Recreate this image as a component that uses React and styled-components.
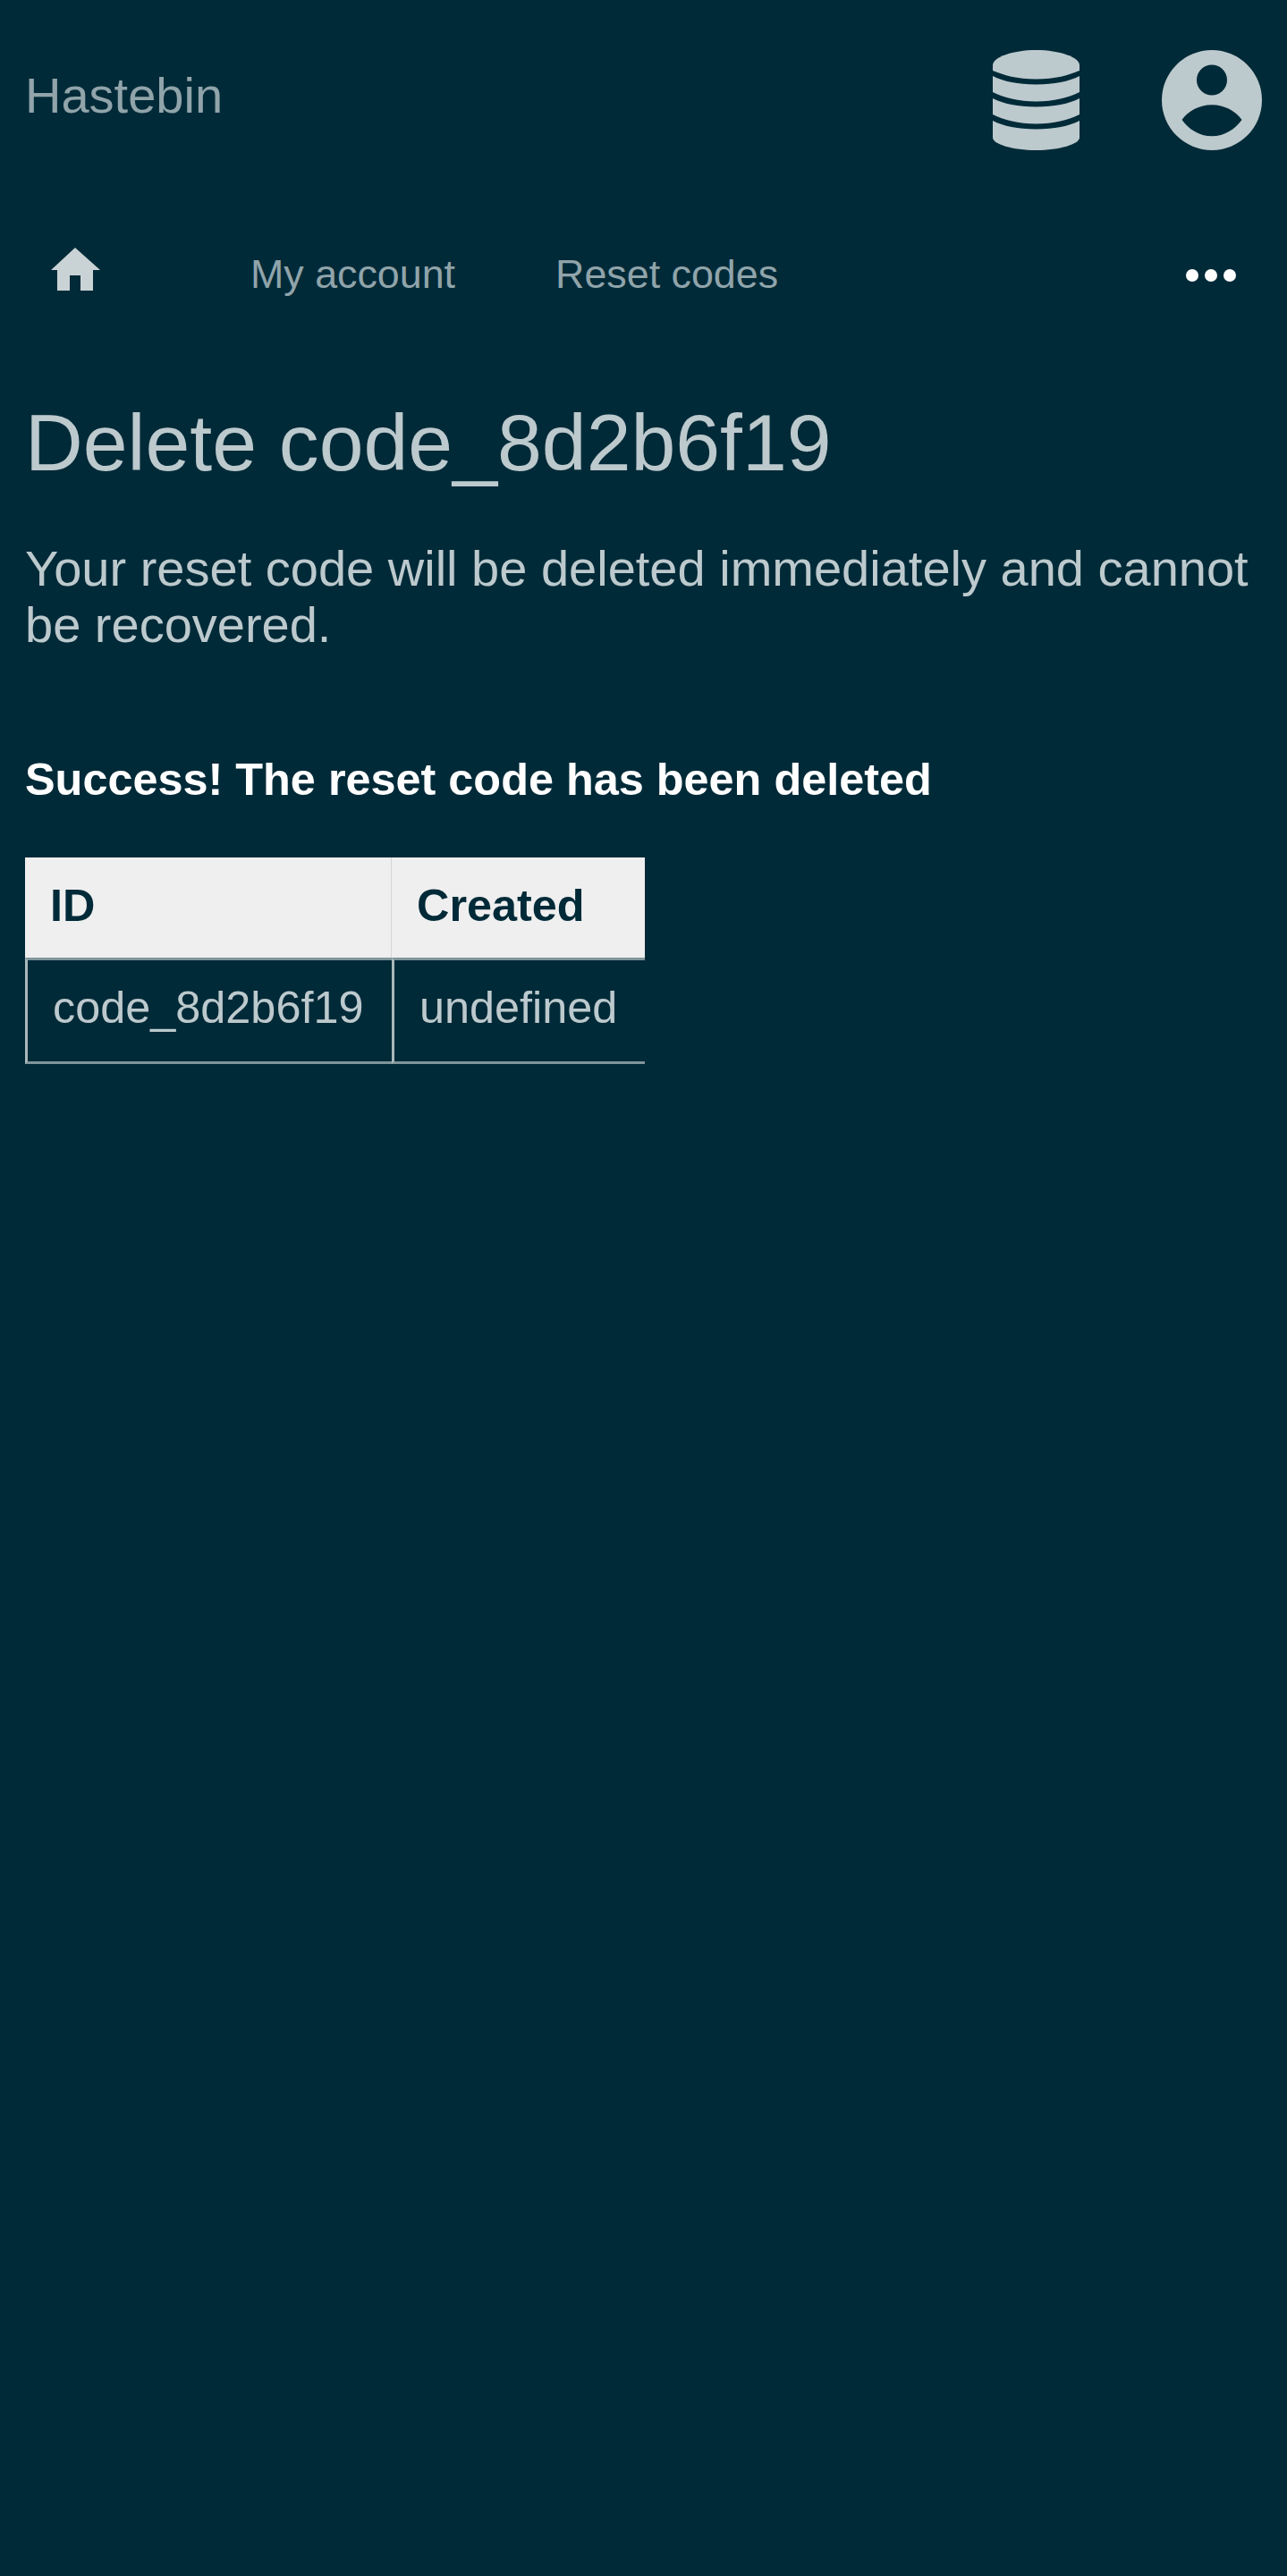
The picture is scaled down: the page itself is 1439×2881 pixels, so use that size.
import React from "react";
import styled, { createGlobalStyle } from "styled-components";

const GlobalStyle = createGlobalStyle`
  html, body {
    margin: 0;
    padding: 0;
    background: #012a38;
  }
  * {
    box-sizing: border-box;
  }
`;

const Page = styled.div`
  min-height: 2881px;
  background: #012a38;
  color: #bcc9cd;
  font-family: "Liberation Sans", Arial, sans-serif;
`;

const TopBar = styled.header`
  display: flex;
  align-items: center;
  justify-content: space-between;
  height: 112px;
  margin-top: 56px;
  padding: 0 28.5px 0 28px;
`;

const Brand = styled.a`
  padding-bottom: 11px;
  font-size: 56px;
  color: #90a4aa;
`;

const TopIcons = styled.div`
  display: flex;
  align-items: center;
  gap: 91.5px;
  color: #bcc9cd;
`;

const Nav = styled.nav`
  display: flex;
  align-items: center;
  height: 62px;
  margin-top: 109px;
  padding: 0 28px;
`;

const NavHome = styled.a`
  display: flex;
  padding: 0 168px 14px 29px;
`;

const NavLink = styled.a`
  padding-bottom: 3px;
  font-size: 44.8px;
  color: #90a4aa;
  margin-right: ${props => props.$gap || 0}px;
`;

const NavMore = styled.a`
  display: flex;
  margin-left: auto;
  padding-right: 29px;
`;

const Main = styled.main`
  padding: 0 28px;
`;

const Title = styled.h1`
  margin: 105px 0 0;
  font-size: 89.6px;
  font-weight: 400;
  line-height: 102px;
`;

const Lead = styled.p`
  margin: 59px 0 0;
  font-size: 56px;
  line-height: 62.5px;
`;

const Success = styled.p`
  margin: 113px 0 0;
  font-size: 50.4px;
  font-weight: 700;
  line-height: 58px;
  color: #ffffff;
`;

const TableClip = styled.div`
  width: 693px;
  margin-top: 58px;
  overflow: hidden;
`;

const CodesTable = styled.table`
  border-collapse: separate;
  border-spacing: 0;
  table-layout: fixed;
  width: 693px;
  font-size: 50.4px;
`;

const HeadCell = styled.th`
  width: ${props => props.$width}px;
  height: 112px;
  padding: 0 28px 6px;
  background: #efefef;
  color: #012a38;
  font-weight: 700;
  text-align: left;
  border-right: ${props => (props.$last ? "none" : "1px solid #d4d6d6")};
`;

const BodyCell = styled.td`
  height: 119px;
  padding: 0 0 8px 28px;
  border-top: 3px solid #7f9599;
  border-bottom: 3px solid #7f9599;
  border-left: 3px solid #a9b8ba;
`;

const DatabaseIcon = () => (
  <svg width="97" height="112" viewBox="0 0 97 112" fill="#bcc9cd">
    <path d="M0 17C0 8 22 0 48.5 0S97 8 97 17V23C85 28 70 32.5 48.5 32.5S12 28 0 23Z" />
    <path d="M0 29C12 35 28 38.5 48.5 38.5S85 35 97 29V47C85 53 68 57.5 48.5 57.5S12 53 0 47Z" />
    <path d="M0 54C12 60 28 63.5 48.5 63.5S85 60 97 54V72C85 78 68 82.5 48.5 82.5S12 78 0 72Z" />
    <path d="M0 79C12 85 28 88.5 48.5 88.5S85 85 97 79V98C97 105 75 112 48.5 112S0 105 0 98Z" />
  </svg>
);

const HomeIcon = () => (
  <svg width="55" height="48" viewBox="0 0 55 48" fill="#c9d3d5">
    <path d="M27 0 55 25H47V48H33V31H21V48H7V25H0Z" />
  </svg>
);

const UserIcon = () => (
  <svg width="112" height="112" viewBox="0 0 112 112" fill="#bcc9cd">
    <path
      fillRule="evenodd"
      d="M56 0a56 56 0 1 0 0 112A56 56 0 0 0 56 0ZM56 16.5a17 17 0 1 1 0 34 17 17 0 0 1 0-34ZM22.5 78C30 68 42 61.3 56 61.3S82 68 89.5 78C82 88.5 70 96.3 56 96.3S30 88.5 22.5 78Z"
    />
  </svg>
);

const MoreIcon = () => (
  <svg width="56" height="14" viewBox="0 0 56 14" fill="#ffffff">
    <circle cx="7" cy="7" r="7" />
    <circle cx="28" cy="7" r="7" />
    <circle cx="49" cy="7" r="7" />
  </svg>
);

const App = () => {
  return (
    <Page>
      <GlobalStyle />
      <TopBar>
        <Brand>Hastebin</Brand>
        <TopIcons>
          <DatabaseIcon />
          <UserIcon />
        </TopIcons>
      </TopBar>

      <Nav>
        <NavHome>
          <HomeIcon />
        </NavHome>
        <NavLink $gap={112}>My account</NavLink>
        <NavLink>Reset codes</NavLink>
        <NavMore>
          <MoreIcon />
        </NavMore>
      </Nav>

      <Main>
        <Title>Delete code_8d2b6f19</Title>
        <Lead>Your reset code will be deleted immediately and cannot be recovered.</Lead>
        <Success>Success! The reset code has been deleted</Success>
        <TableClip>
          <CodesTable>
            <thead>
              <tr>
                <HeadCell $width={410}>ID</HeadCell>
                <HeadCell $width={283} $last>Created</HeadCell>
              </tr>
            </thead>
            <tbody>
              <tr>
                <BodyCell>code_8d2b6f19</BodyCell>
                <BodyCell>undefined</BodyCell>
              </tr>
            </tbody>
          </CodesTable>
        </TableClip>
      </Main>
    </Page>
  );
};

export default App;
